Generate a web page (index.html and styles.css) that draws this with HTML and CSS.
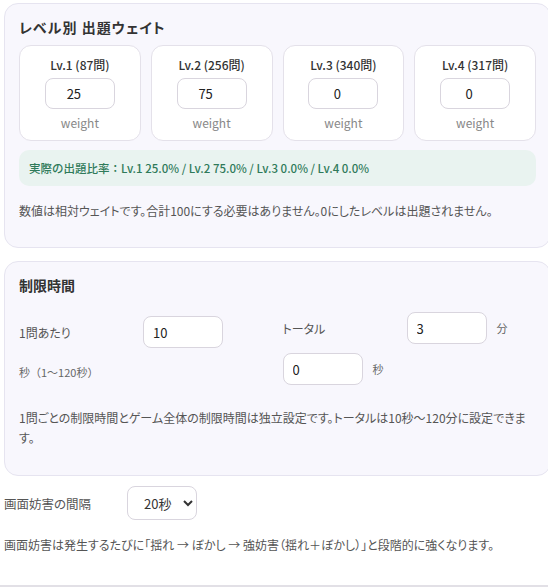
FILE: index.html
```html
<!DOCTYPE html>
<html lang="ja">
<head>
<meta charset="utf-8">
<title>設定</title>
<link rel="stylesheet" href="styles.css">
</head>
<body>
<div class="page">
  <section class="card card-weights">
    <h3 class="card-title card-title-spaced">レベル別 出題ウェイト</h3>
    <div class="levels">
      <div class="level">
        <div class="level-name">Lv.1 (87問)</div>
        <input class="level-input" type="text" value="25">
        <div class="level-unit">weight</div>
      </div>
      <div class="level">
        <div class="level-name">Lv.2 (256問)</div>
        <input class="level-input" type="text" value="75">
        <div class="level-unit">weight</div>
      </div>
      <div class="level">
        <div class="level-name">Lv.3 (340問)</div>
        <input class="level-input" type="text" value="0">
        <div class="level-unit">weight</div>
      </div>
      <div class="level">
        <div class="level-name">Lv.4 (317問)</div>
        <input class="level-input" type="text" value="0">
        <div class="level-unit">weight</div>
      </div>
    </div>
    <div class="ratio">実際の出題比率：Lv.1 25.0% / Lv.2 75.0% / Lv.3 0.0% / Lv.4 0.0%</div>
    <p class="note note-weights">数値は相対ウェイトです。合計100にする必要はありません。0にしたレベルは出題されません。</p>
  </section>

  <section class="card card-time">
    <h3 class="card-title">制限時間</h3>
    <div class="time-grid">
      <div class="field field-left">
        <label class="field-label">1問あたり</label>
        <input class="time-input" type="text" value="10">
        <span class="hint">秒（1〜120秒）</span>
      </div>
      <div class="field field-right">
        <label class="field-label">トータル</label>
        <input class="time-input" type="text" value="3">
        <span class="unit">分</span>
        <input class="time-input" type="text" value="0">
        <span class="unit">秒</span>
      </div>
    </div>
    <p class="note note-time">1問ごとの制限時間とゲーム全体の制限時間は独立設定です。トータルは10秒〜120分に設定できます。</p>
  </section>

  <div class="row">
    <label class="row-label">画面妨害の間隔</label>
    <select class="select">
      <option>20秒</option>
    </select>
  </div>
  <p class="note note-bottom">画面妨害は発生するたびに「揺れ → ぼかし → 強妨害（揺れ＋ぼかし）」と段階的に強くなります。</p>
  <div class="divider"></div>
</div>
</body>
</html>
```
FILE: styles.css
```css
html, body {
  margin: 0;
  padding: 0;
  overflow: hidden;
  background: #ffffff;
}
body {
  font-family: "Noto Sans CJK JP", "Noto Sans", sans-serif;
  font-feature-settings: "palt";
  color: #333;
  font-size: 13px;
}
.page {
  width: 547px;
  padding: 3px 0 0 4px;
}
.card {
  background: #f8f7fd;
  border: 1px solid #e6e4f0;
  border-radius: 14px;
  padding: 13px 14px 14px 14px;
}
.card-weights {
  margin-bottom: 13px;
}
.card-time {
  margin-bottom: 10px;
}
.card-title {
  margin: 0;
  font-size: 14px;
  line-height: 20px;
  font-weight: 700;
  color: #333;
}
.card-title-spaced {
  letter-spacing: 1px;
}
.levels {
  display: grid;
  grid-template-columns: repeat(4, 1fr);
  gap: 10px;
  margin-top: 8px;
}
.level {
  background: #fff;
  border: 1px solid #e4e1ea;
  border-radius: 12px;
  padding: 11px 6px 9px;
  display: flex;
  flex-direction: column;
  align-items: center;
}
.level-name {
  font-size: 12px;
  line-height: 16px;
  font-weight: 500;
  color: #333;
}
.level-input {
  margin-top: 5px;
  width: 70px;
  height: 31px;
  box-sizing: border-box;
  border: 1px solid #d9d5de;
  border-radius: 8px;
  background: #fff;
  font: inherit;
  font-size: 13px;
  color: #222;
  text-align: center;
  padding: 0 12px 0 0;
}
.level-unit {
  margin-top: 6px;
  font-size: 12px;
  line-height: 16px;
  color: #888;
}
.ratio {
  margin-top: 9px;
  background: #e9f3f0;
  border-radius: 10px;
  height: 36px;
  line-height: 36px;
  padding: 0 10px;
  font-size: 11.5px;
  font-weight: 500;
  font-feature-settings: normal;
  color: #2f7a5a;
}
.note {
  margin: 15px 0 12px;
  font-size: 12px;
  line-height: 20px;
  color: #555;
}
.note-weights {
  margin-bottom: 12px;
}
.time-grid {
  display: grid;
  grid-template-columns: 1fr 1fr;
  column-gap: 10px;
  align-items: start;
  margin-top: 17px;
}
.field {
  display: flex;
  flex-wrap: wrap;
  align-items: center;
  column-gap: 10px;
  row-gap: 9px;
}
.field-left {
  margin-top: 4px;
  row-gap: 16px;
}
.field-label {
  width: 114px;
  font-size: 12px;
  color: #555;
}
.time-input {
  width: 80px;
  height: 32px;
  box-sizing: border-box;
  border: 1px solid #d9d5de;
  border-radius: 8px;
  background: #fff;
  font: inherit;
  font-size: 13px;
  color: #222;
  padding: 0 9px;
}
.hint {
  font-size: 11px;
  line-height: 17px;
  color: #666;
  font-feature-settings: normal;
}
.unit {
  font-size: 11px;
  color: #666;
}
.note-time {
  margin-top: 23px;
  margin-bottom: 13px;
  max-width: 512px;
}
.row {
  display: flex;
  align-items: center;
  gap: 10px;
}
.row-label {
  width: 113px;
  font-size: 12.5px;
  color: #555;
}
.select {
  width: 70px;
  height: 34px;
  border: 1px solid #d9d5de;
  border-radius: 8px;
  background: #fff;
  font: inherit;
  font-size: 13px;
  color: #333;
  padding: 0 6px 0 12px;
}
.note-bottom {
  margin: 15px 0 0;
}
.divider {
  margin-top: 30px;
  margin-left: -4px;
  width: 552px;
  border-top: 2px solid #e2e0e6;
}
```
